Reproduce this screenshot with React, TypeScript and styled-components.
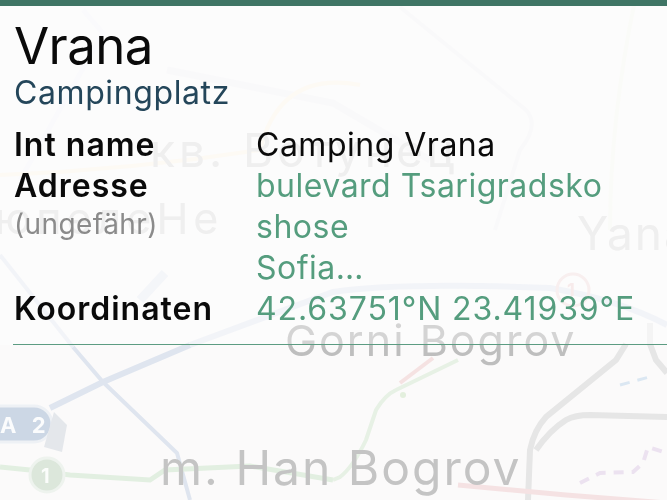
import styled, { createGlobalStyle } from "styled-components";

const GlobalStyle = createGlobalStyle`
  html, body {
    margin: 0;
    padding: 0;
  }
  body {
    width: 667px;
    height: 500px;
    overflow: hidden;
    font-family: Inter, "Liberation Sans", sans-serif;
  }
`;

const Screen = styled.div`
  position: relative;
  width: 667px;
  height: 500px;
  overflow: hidden;
  background: #fbfafa;
  filter: blur(0.35px);
`;

const MapLines = styled.svg`
  position: absolute;
  inset: 0;
  width: 667px;
  height: 500px;
  filter: blur(0.6px);
`;

const MapLabel = styled.span<{ $x: number; $y: number; $size: number; $color: string; $track?: number; $bold?: boolean }>`
  position: absolute;
  left: ${(p) => p.$x}px;
  top: ${(p) => p.$y}px;
  font-size: ${(p) => p.$size}px;
  font-weight: ${(p) => (p.$bold ? 700 : 400)};
  line-height: 1;
  color: ${(p) => p.$color};
  letter-spacing: ${(p) => p.$track ?? 0}px;
  white-space: nowrap;
`;

const Panel = styled.section`
  position: relative;
  box-sizing: border-box;
  display: flex;
  flex-direction: column;
  height: 345px;
  padding: 15px 0 0 14px;
  border-top: 6px solid #3f7565;
  background: rgba(255, 255, 255, 0.35);
`;

const Title = styled.h1`
  margin: 0;
  font-size: 51px;
  line-height: 50px;
  font-weight: 400;
  letter-spacing: -0.6px;
  color: #0a0a0a;
`;

const Subtitle = styled.div`
  margin-top: 4px;
  font-size: 32px;
  line-height: 36px;
  letter-spacing: 0.6px;
  color: #24465a;
`;

const Details = styled.div`
  flex: 1;
  display: grid;
  grid-template-columns: 242px 1fr;
  grid-auto-rows: min-content;
  margin: 13px 0 0 -1px;
  padding-left: 1px;
  border-bottom: 1px solid #5c9c82;
`;

const Label = styled.div`
  font-size: 32px;
  line-height: 41px;
  font-weight: 600;
  letter-spacing: 1px;
  color: #0a0a0a;
`;

const Note = styled.div`
  font-size: 28px;
  line-height: 36px;
  font-weight: 400;
  letter-spacing: 0.4px;
  color: #8b8b8b;
`;

const Value = styled.div<{ $link?: boolean; $track?: number }>`
  font-size: 32px;
  line-height: 41px;
  white-space: nowrap;
  letter-spacing: ${(p) => p.$track ?? 0.5}px;
  color: ${(p) => (p.$link ? "#559d7e" : "#0a0a0a")};
`;

export default function App() {
  return (
    <>
      <GlobalStyle />
      <Screen>
        <MapLines viewBox="0 0 667 500" fill="none">
          <path d="M73 347 L103 382 L177 453 L190 500" stroke="#dfe5ef" strokeWidth="4" />
          <path d="M0 255 L73 347" stroke="#eceff5" strokeWidth="4" />
          <path d="M50 408 L103 382 L190 345" stroke="#dfe5ef" strokeWidth="6" />
          <path d="M190 345 L333 292 Q400 282 550 288 Q620 300 667 325" stroke="#eceff5" strokeWidth="6" />
          <path d="M165 273 L140 300" stroke="#eef1f6" strokeWidth="9" />
          <path d="M0 467 L30 470 L70 475 L150 480 L165 470 L250 466 L333 480" stroke="#e2efe1" strokeWidth="5" />
          <path d="M333 480 L340 477 Q353 467 366 440 L376 410 Q385 395 396 390 L458 360" stroke="#e7f1e5" strokeWidth="4" />
          <path d="M400 383 L433 358" stroke="#f5e2e2" strokeWidth="4" />
          <circle cx="403" cy="395" r="3" fill="#e3efdd" />
          <path d="M528 500 L530 450 Q534 430 546 417 L616 360 L626 344" stroke="#e6e6e6" strokeWidth="6" />
          <path d="M536 450 Q550 430 566 420 Q575 415 590 415 L667 417" stroke="#e6e6e6" strokeWidth="6" />
          <path d="M650 344 L656 360 L667 373" stroke="#e6e6e6" strokeWidth="6" />
          <path d="M650 323 L650 344" stroke="#efefef" strokeWidth="6" />
          <path d="M458 485 L566 495 L667 503" stroke="#f5e2e3" strokeWidth="5" />
          <path d="M580 483 L600 473 L633 472 L643 463 L648 447 L667 453" stroke="#ece2f0" strokeWidth="4" strokeDasharray="10 8" />
          <path d="M620 385 L653 376" stroke="#dbe7f2" strokeWidth="3" strokeDasharray="10 8" />
          <path d="M83 10 L103 33 L20 180" stroke="#f8f8fa" strokeWidth="5" />
          <path d="M167 70 L333 103 L430 160" stroke="#f6f6f8" strokeWidth="7" />
          <path d="M0 175 Q130 170 260 150 Q280 70 360 85" stroke="#fcf7ef" strokeWidth="4" />
          <path d="M400 7 L526 110 Q540 125 520 150 L495 230" stroke="#f6f6f8" strokeWidth="4" />
          <path d="M635 0 Q610 120 610 230" stroke="#f8f9f5" strokeWidth="4" />
          <rect x="-20" y="406" width="72" height="36" rx="18" fill="#ccd7e5" stroke="#eef1f5" strokeWidth="3" />
          <path d="M54 412 L67 425 L62 452 L44 447 Z" fill="#e4e7eb" />
          <circle cx="47" cy="475" r="17" fill="#dce7db" stroke="#eef3ee" strokeWidth="3" />
          <circle cx="573" cy="290" r="16" fill="none" stroke="#f5e6e6" strokeWidth="3" />
        </MapLines>
        <MapLabel $x={0} $y={414} $size={22} $color="#fbfcfd" $track={5} $bold>A 2</MapLabel>
        <MapLabel $x={41} $y={466} $size={20} $color="#fbfdfb" $bold>1</MapLabel>
        <MapLabel $x={567} $y={281} $size={18} $color="#f3e0e0" $bold>1</MapLabel>
        <MapLabel $x={150} $y={127} $size={46} $color="#e6e6e6" $track={4}>кв. Вотунец</MapLabel>
        <MapLabel $x={-5} $y={197} $size={43} $color="#e6e6e6" $track={5}>юпелеНе</MapLabel>
        <MapLabel $x={577} $y={210} $size={46} $color="#e6e6e6" $track={2}>Yana</MapLabel>
        <MapLabel $x={285} $y={319} $size={43} $color="#bebebe" $track={2}>Gorni Bogrov</MapLabel>
        <MapLabel $x={160} $y={444} $size={48} $color="#c4c4c4" $track={2}>m. Han Bogrov</MapLabel>
        <Panel>
          <Title>Vrana</Title>
          <Subtitle>Campingplatz</Subtitle>
          <Details>
            <Label>Int name</Label>
            <Value>Camping Vrana</Value>
            <Label>
              Adresse
              <Note>(ungefähr)</Note>
            </Label>
            <Value $link>
              bulevard Tsarigradsko
              <br />
              shose
              <br />
              Sofia…
            </Value>
            <Label>Koordinaten</Label>
            <Value $link $track={0.9}>42.63751°N 23.41939°E</Value>
          </Details>
        </Panel>
      </Screen>
    </>
  );
}
